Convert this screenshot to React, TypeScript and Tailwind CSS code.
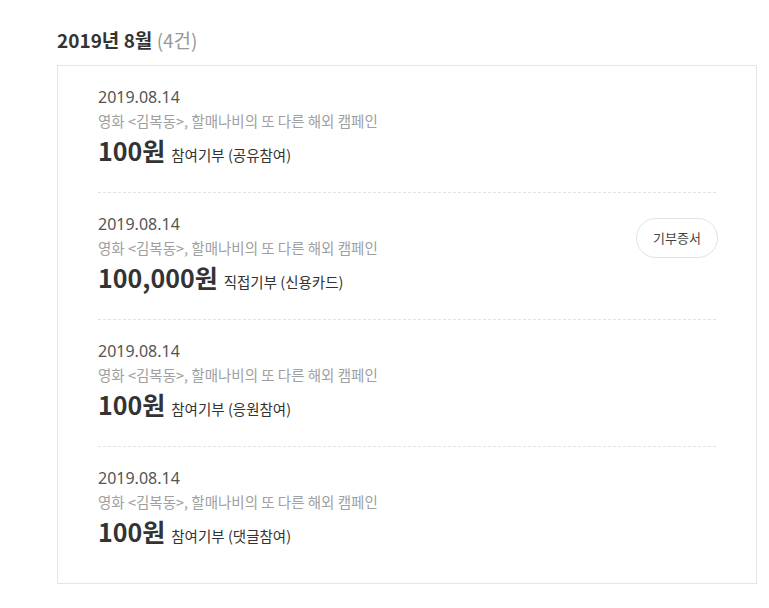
const items = [
  { amount: "100원", kind: "참여기부", method: "(공유참여)", receipt: false },
  { amount: "100,000원", kind: "직접기부", method: "(신용카드)", receipt: true },
  { amount: "100원", kind: "참여기부", method: "(응원참여)", receipt: false },
  { amount: "100원", kind: "참여기부", method: "(댓글참여)", receipt: false },
];

export default function App() {
  return (
    <div className="min-h-screen bg-white px-[57px] pt-[28px] font-['Noto_Sans_CJK_KR','Noto_Sans',sans-serif]">
      <h2 className="h-[24px] text-[19px] font-bold leading-[24px] text-[#333]">
        2019년 8월 <span className="font-normal text-[#999]">(4건)</span>
      </h2>

      <div className="mt-[13px] w-[700px] border border-[#e5e5e5] px-10 pb-[10px]">
        {items.map((item, idx) => (
          <div
            key={idx}
            className={
              "flex justify-between pt-[21px] pb-[27px] " +
              (idx < items.length - 1 ? "border-b border-dashed border-[#e2e2e2]" : "")
            }
          >
            <div>
              <p className="h-[20px] text-[16px] leading-[20px] text-[#555] font-['Noto_Sans','Noto_Sans_CJK_KR',sans-serif]">
                2019.08.14
              </p>
              <p className="mt-[4px] h-[20px] text-[14.5px] leading-[20px] text-[#a0a0a0]">
                영화 &lt;김복동&gt;, 할매나비의 또 다른 해외 캠페인
              </p>
              <p className="mt-[4px] flex h-[30px] items-baseline leading-[30px] text-[#333]">
                <span className="text-[25px] font-bold">{item.amount}</span>
                <span className="ml-[6px] text-[14.5px]">
                  {item.kind} {item.method}
                </span>
              </p>
            </div>
            {item.receipt && (
              <button className="mt-[4px] mr-[-2px] h-[40px] w-[82px] rounded-full border border-[#e2e2e2] bg-white text-[13px] text-[#444]">
                기부증서
              </button>
            )}
          </div>
        ))}
      </div>
    </div>
  );
}
